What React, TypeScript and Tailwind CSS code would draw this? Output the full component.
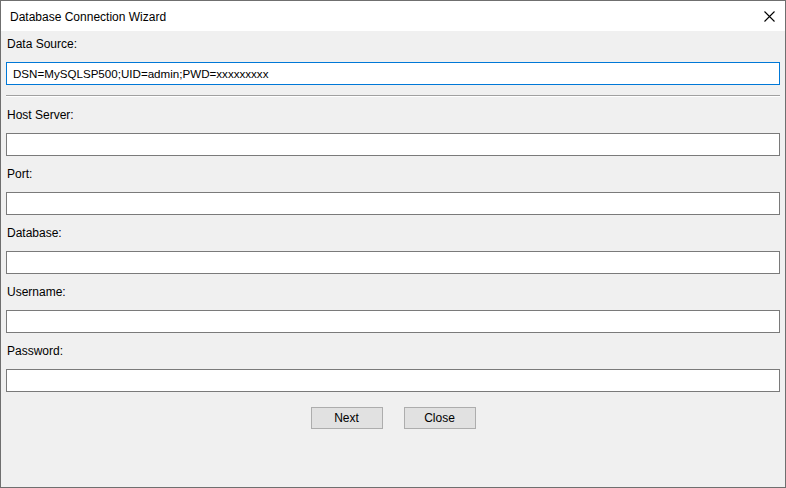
import React, { useState } from "react";

const fields = ["Host Server:", "Port:", "Database:", "Username:", "Password:"];

const font = { fontFamily: '"Segoe UI", "Liberation Sans", Arial, sans-serif' };

export default function App() {
  const [source, setSource] = useState("DSN=MySQLSP500;UID=admin;PWD=xxxxxxxxx");

  return (
    <div
      className="w-[786px] h-[488px] border border-[#6f6f6f] bg-[#f0f0f0] text-[12px] text-black flex flex-col"
      style={font}
    >
      {/* title bar */}
      <div className="h-[30px] bg-white flex items-center justify-between pl-[9px] pr-[10px]">
        <span className="leading-[14px] mt-[1px]">Database Connection Wizard</span>
        <svg width="11" height="11" viewBox="0 0 11 11" className="mt-[1px]">
          <path d="M0.5 0.5 L10.5 10.5 M10.5 0.5 L0.5 10.5" stroke="#000" strokeWidth="1.1" />
        </svg>
      </div>

      <div className="flex flex-col pl-[5px] pr-[5px]">
        <label className="leading-[14px] mt-[6px] pl-[1px]">Data Source:</label>
        <input
          value={source}
          onChange={(e) => setSource(e.target.value)}
          className="mt-[11px] h-[23px] w-full border border-[#0078d7] bg-white px-[6px] outline-none text-[11.6px]"
          style={font}
        />
        <div className="mt-[10px] h-[1px] bg-[#a0a0a0]" />
        <div className="h-[1px] bg-white" />

        {fields.map((f) => (
          <div key={f} className="flex flex-col mt-[11px]">
            <label className="leading-[14px] pl-[1px]">{f}</label>
            <input
              type={f === "Password:" ? "password" : "text"}
              className="mt-[11px] h-[23px] w-full border border-[#7a7a7a] bg-white px-[6px] outline-none"
              style={font}
            />
          </div>
        ))}

        <div className="flex justify-center gap-[21px] mt-[15px]">
          <button className="w-[72px] h-[22px] border border-[#adadad] bg-[#e1e1e1] leading-[14px]">
            Next
          </button>
          <button className="w-[72px] h-[22px] border border-[#adadad] bg-[#e1e1e1] leading-[14px]">
            Close
          </button>
        </div>
      </div>
    </div>
  );
}
